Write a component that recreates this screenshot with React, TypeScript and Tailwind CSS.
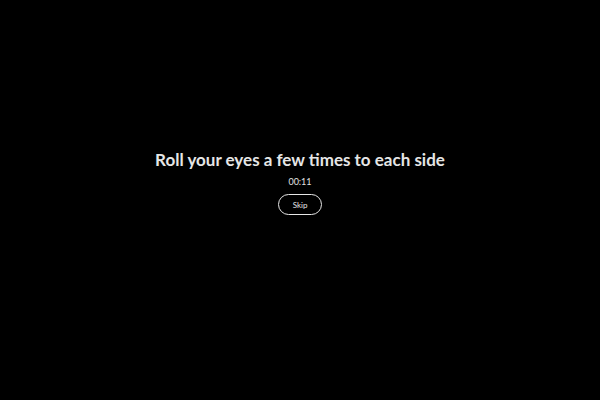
export default function App() {
  return (
    <div className="h-[400px] w-full bg-black flex flex-col items-center justify-center pb-[36px] font-['Lato',sans-serif]">
      <h1 className="text-[17px] font-bold text-[#e6e6e6] leading-[22px]">
        Roll your eyes a few times to each side
      </h1>
      <div className="mt-[5px] text-[9px] leading-[12px] text-[#e0e0e0]">00:11</div>
      <button className="mt-[6px] w-[44px] h-[21px] rounded-full border border-[#e6e6e6] text-[8px] text-[#e6e6e6]">
        Skip
      </button>
    </div>
  );
}
